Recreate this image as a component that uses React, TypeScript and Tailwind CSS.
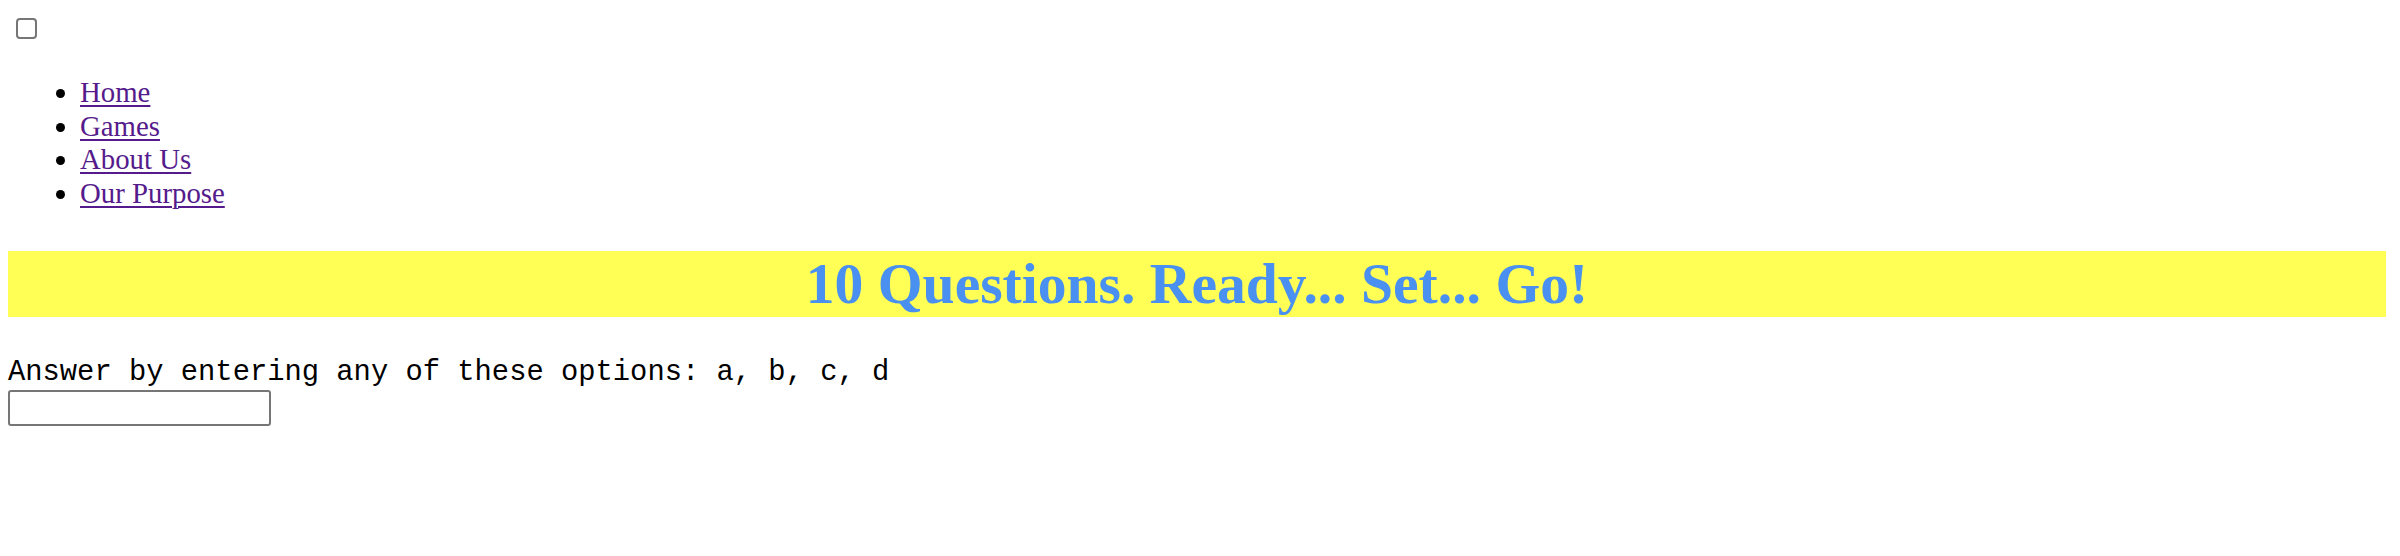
import React from "react";

export default function App() {
  const links = ["Home", "Games", "About Us", "Our Purpose"];
  return (
    <div className="bg-white min-h-[556px] pl-[8px] pr-[14px] pt-[18px] font-['Liberation_Serif',serif] text-black">
      <input
        type="checkbox"
        className="block appearance-none ml-[8px] w-[21px] h-[21px] border-2 border-[#767676] rounded-[4px] bg-white m-0"
      />
      <ul className="mt-[37px] pl-[72px] list-disc text-[28.8px] leading-[33.6px]">
        {links.map((l) => (
          <li key={l}>
            <a href="#" className="text-[#551a8b] underline decoration-[2px] underline-offset-[3px]">
              {l}
            </a>
          </li>
        ))}
      </ul>
      <h1 className="mt-[41px] bg-[#ffff55] text-[#4a90f0] text-center font-bold text-[57.6px] leading-[66px] font-['Liberation_Serif',serif]">
        10 Questions. Ready... Set... Go!
      </h1>
      <div className="mt-[40px] font-['Liberation_Mono',monospace] text-[28.8px] leading-[32.6px]">
        Answer by entering any of these options: a, b, c, d
      </div>
      <input
        type="text"
        className="block w-[263px] h-[36px] border-2 border-[#767676] rounded-[3px] bg-white"
      />
    </div>
  );
}
